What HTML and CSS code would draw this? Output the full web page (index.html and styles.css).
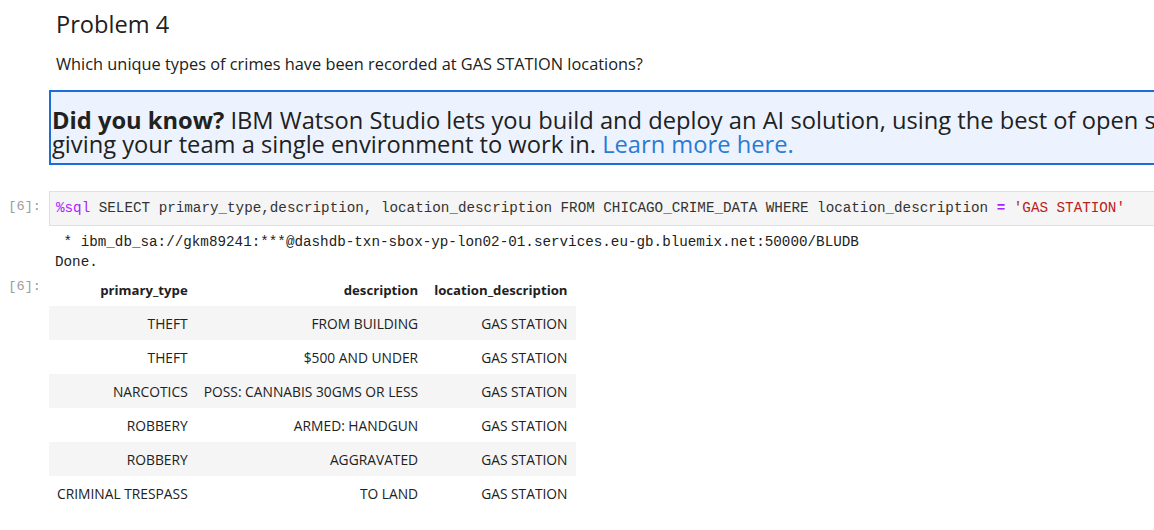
FILE: index.html
```html
<!DOCTYPE html>
<html>
<head>
<meta charset="utf-8">
<link rel="stylesheet" href="styles.css">
</head>
<body>
<div class="nb">
  <div class="cell">
    <div class="gutter"></div>
    <div class="content md">
      <h2 class="title">Problem 4</h2>
      <p class="question">Which unique types of crimes have been recorded at GAS STATION locations?</p>
      <div class="callout">
        <b>Did you know?</b> IBM Watson Studio lets you build and deploy an AI solution, using the best of open source and IBM software and<br>giving your team a single environment to work in. <a class="link">Learn more here.</a>
      </div>
    </div>
  </div>

  <div class="cell code-cell">
    <div class="gutter prompt">[6]:</div>
    <div class="content input"><span class="magic">%sql</span> SELECT primary_type,description, location_description FROM CHICAGO_CRIME_DATA WHERE location_description <span class="op">=</span> <span class="str">'GAS STATION'</span></div>
  </div>

  <div class="cell out-cell">
    <div class="gutter"></div>
    <div class="content stream"> * ibm_db_sa://gkm89241:***@dashdb-txn-sbox-yp-lon02-01.services.eu-gb.bluemix.net:50000/BLUDB
Done.</div>
  </div>

  <div class="cell out-cell">
    <div class="gutter prompt">[6]:</div>
    <div class="content">
      <table class="df">
        <thead>
          <tr><th>primary_type</th><th>description</th><th>location_description</th></tr>
        </thead>
        <tbody>
          <tr><td>THEFT</td><td>FROM BUILDING</td><td>GAS STATION</td></tr>
          <tr><td>THEFT</td><td>$500 AND UNDER</td><td>GAS STATION</td></tr>
          <tr><td>NARCOTICS</td><td>POSS: CANNABIS 30GMS OR LESS</td><td>GAS STATION</td></tr>
          <tr><td>ROBBERY</td><td>ARMED: HANDGUN</td><td>GAS STATION</td></tr>
          <tr><td>ROBBERY</td><td>AGGRAVATED</td><td>GAS STATION</td></tr>
          <tr><td>CRIMINAL TRESPASS</td><td>TO LAND</td><td>GAS STATION</td></tr>
        </tbody>
      </table>
    </div>
  </div>
</div>
</body>
</html>
```

FILE: styles.css
```css
html, body {
  margin: 0;
  padding: 0;
  background: #ffffff;
  overflow: hidden;
}
body {
  width: 1154px;
  height: 530px;
  font-family: "Open Sans", "Noto Sans", sans-serif;
  color: #212121;
}
.nb {
  display: flex;
  flex-direction: column;
}
.cell {
  display: flex;
  flex-direction: row;
  align-items: flex-start;
}
.gutter {
  flex: 0 0 49px;
  width: 49px;
  box-sizing: border-box;
}
.prompt {
  font-family: "Liberation Mono", "DejaVu Sans Mono", monospace;
  font-size: 13.6px;
  color: #9e9e9e;
  text-align: right;
  padding-right: 8px;
}
.content {
  flex: 1 1 auto;
  min-width: 0;
}
.md {
  padding-top: 9px;
}
.title {
  margin: 0 0 0 7px;
  font-size: 23.6px;
  font-weight: 500;
  line-height: 30px;
}
.question {
  margin: 14px 0 0 7px;
  font-size: 16.35px;
  line-height: 22px;
}
.callout {
  margin-top: 15px;
  width: 1200px;
  box-sizing: border-box;
  border: 2px solid #1a6ed8;
  background: #ecf3fe;
  padding: 16px 0 0 1px;
  font-size: 23.7px;
  line-height: 24px;
  white-space: nowrap;
  overflow: hidden;
  height: 75px;
}
.callout b {
  font-weight: 700;
}
.link {
  color: #2a7bd2;
}
.code-cell {
  margin-top: 26px;
}
.code-cell .prompt {
  padding-top: 8px;
}
.input {
  background: #f5f5f5;
  border: 1px solid #e0e0e0;
  border-right: none;
  height: 35px;
  box-sizing: border-box;
  padding: 7px 0 0 6px;
  font-family: "Liberation Mono", "DejaVu Sans Mono", monospace;
  font-size: 14.25px;
  line-height: 18px;
  color: #333333;
  white-space: pre;
  overflow: hidden;
}
.magic { color: #aa22ff; }
.op { color: #aa22ff; font-weight: bold; }
.str { color: #ba2121; }
.stream {
  margin-top: 6px;
  padding-left: 6px;
  font-family: "Liberation Mono", "DejaVu Sans Mono", monospace;
  font-size: 14.25px;
  line-height: 20px;
  color: #212121;
  white-space: pre;
}
.out-cell + .out-cell {
  margin-top: 1px;
}
.out-cell + .out-cell .prompt {
  padding-top: 6px;
}
.df {
  border-collapse: collapse;
  font-size: 13.8px;
  color: #212121;
}
.df th {
  font-weight: 700;
  font-size: 13.2px;
  text-align: right;
  padding: 0 8px;
  height: 33px;
  vertical-align: middle;
}
.df td {
  text-align: right;
  padding: 0 8px;
  height: 34px;
  vertical-align: middle;
}
.df tbody tr:nth-child(odd) {
  background: #f5f5f5;
}
```
